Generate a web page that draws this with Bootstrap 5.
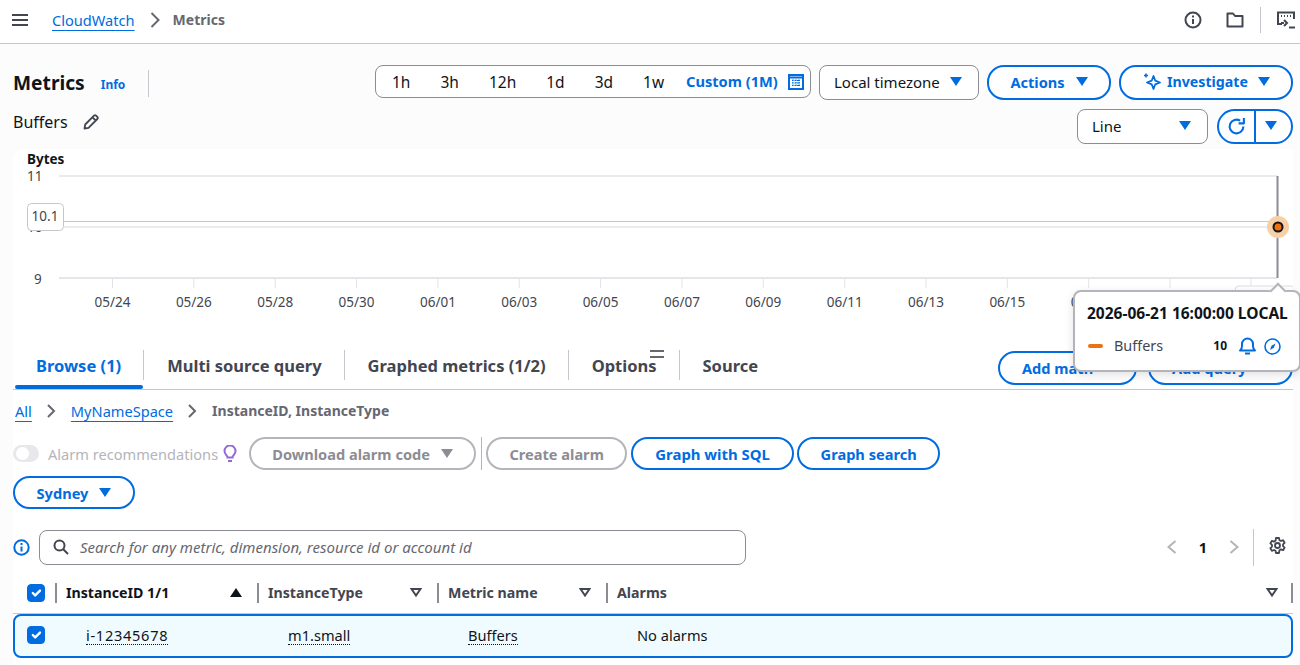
<!DOCTYPE html>
<html lang="en">
<head>
    <meta charset="UTF-8">
    <meta name="viewport" content="width=device-width, initial-scale=1.0">
    <title>Metrics | CloudWatch</title>
    <link href="https://cdn.jsdelivr.net/npm/bootstrap@5.3.0/dist/css/bootstrap.min.css" rel="stylesheet">
    <style>
        html, body { height: 100%; overflow: hidden; }
        body { font-family: "Noto Sans", "Liberation Sans", sans-serif; font-size: 14.6px; line-height: 20px; color: #0f141a; background: #fff; position: relative; }
        svg { display: block; flex: none; }
        a { color: #006ce0; }

        .topbar { height: 44px; border-bottom: 1px solid #c6c6cd; padding: 0 5px 3px 12px; }
        .crumb-link { text-decoration: underline; text-underline-offset: 4px; text-decoration-thickness: 1px; }
        .crumb-current { color: #656871; font-weight: 700; font-size: 14px; }
        .crumb-top { margin-left: 24px; }
        .crumb-sep { margin: 0 13px 0 15px; }
        .top-divider { width: 1px; height: 26px; background: #c6c6cd; }

        .page-wrap { background: #fcfcfd; padding: 0 7px 0 13px; height: 621px; }
        .head-area { height: 105px; }
        .page-title { font-size: 19.2px; line-height: 28px; font-weight: 700; margin: 0; }
        .info-link { font-size: 12px; font-weight: 700; text-decoration: none; margin: 3px 23px 0 16px; }
        .title-divider { width: 1px; height: 27px; background: #c6c6cd; }
        .title-row { margin-top: 25px; }
        .graph-name { margin-top: 13px; height: 24px; font-size: 16px; }
        .pencil-icon { margin-left: 15px; }

        .controls-row { margin-top: 21px; height: 35px; gap: 8px; }
        .controls-row + .controls-row { margin-top: 9px; gap: 9px; }
        .range-box { height: 33px; width: 436px; border: 1px solid #8c8c94; border-radius: 8px; background: #fff; padding: 0 6px 0 1px; }
        .range-item { padding: 0 15px; font-size: 15.500px; }
        .range-custom { color: #006ce0; font-weight: 700; margin-left: 7px; margin-right: 10px; padding-bottom: 2px; }
        .select-box { height: 35px; border: 1px solid #8c8c94; border-radius: 8px; background: #fff; padding: 0 16px 2px 14px; font-size: 15px; }
        .select-tz { width: 160px; }
        .select-line { width: 131px; }

        .pill-btn { height: 33px; border: 2px solid #006ce0; border-radius: 17px; background: #fff; color: #006ce0; font-weight: 700; font-size: 14.6px; line-height: 20px; padding: 0 22px; display: inline-flex; align-items: center; justify-content: center; white-space: nowrap; }
        .pill-btn:hover, .pill-btn:disabled { color: #006ce0; border-color: #006ce0; background: #fff; }
        .pill-btn:disabled { opacity: 1; color: #8c8c94; border-color: #b4b4bb; }
        .head-btn { height: 35px; padding-bottom: 2px; }
        .btn-actions { width: 124px; gap: 11px; }
        .btn-investigate { width: 174px; justify-content: flex-start; font-size: 14.2px; }
        .spark-icon { margin-right: 6px; }
        .investigate-caret { margin-left: 10px; }
        .split-left, .split-right { height: 35px; padding: 0; }
        .split-left { width: 38px; border-radius: 18px 0 0 18px; border-right-width: 1px; }
        .split-right { width: 38px; border-radius: 0 18px 18px 0; border-left-width: 1px; padding: 0 5px 3px 0; }

        .work-panel { background: #fff; height: 516px; border-radius: 10px 0 0 0; }
        .chart-text { font-family: "Noto Sans", "Liberation Sans", sans-serif; font-size: 13.500px; fill: #424650; }
        .chart-unit { font-weight: 700; fill: #0f141a; }

        .tab-row { height: 40px; border-bottom: 1px solid #c6c6cd; }
        .tab-item { height: 38px; padding: 0 22px 6px 24px; display: flex; align-items: center; font-size: 16.500px; font-weight: 700; color: #424650; position: relative; white-space: nowrap; }
        .tab-item + .tab-item::before { content: ""; position: absolute; left: 0; top: 0; height: 30px; width: 1px; background: #c6c6cd; }
        .tab-active { color: #006ce0; margin-left: 2px; padding: 0 22px 6px 21px; }
        .tab-active::after { content: ""; position: absolute; left: 0; right: 0; bottom: -1px; height: 4px; border-radius: 2px; background: #006ce0; }
        .add-math { width: 139px; height: 34px; margin: 1px 11px 0 0; justify-content: flex-start; }
        .add-query { width: 145px; height: 34px; margin-top: 1px; justify-content: flex-start; }

        .path-row { height: 20px; margin-top: 11px; padding-left: 2px; gap: 15px; }
        .action-row { margin-top: 16px; height: 33px; gap: 4px; }
        .alarm-toggle { width: 26px; height: 17px; border-radius: 9px; background: #e8e8ec; position: relative; }
        .alarm-toggle::after { content: ""; position: absolute; left: 3px; top: 2px; width: 13px; height: 13px; border-radius: 50%; background: #fff; }
        .alarm-label { color: #b4b4bb; margin: 0 1px 0 5px; }
        .action-divider { width: 1px; height: 33px; background: #b4b4bb; margin: 0 0 0 1px; }
        .btn-download { width: 227px; margin-left: 8px; gap: 11px; }
        .btn-create { width: 141px; }
        .btn-sql { width: 163px; font-size: 14.9px; }
        .btn-search { width: 143px; margin-left: -1px; }
        .region-row { margin-top: 6px; }
        .btn-region { width: 122px; gap: 11px; }

        .search-row { margin-top: 20px; height: 36px; }
        .search-box { width: 707px; height: 35px; margin-left: 9px; border: 1px solid #8c8c94; border-radius: 8px; padding: 0 13px; gap: 11px; }
        .search-box input { border: 0; outline: 0; flex: 1; font: italic 15px "Noto Sans", "Liberation Sans", sans-serif; color: #0f141a; background: transparent; padding: 0; }
        .search-box input::placeholder { color: #656871; }
        .pager-prev { margin-right: 16px; }
        .pager-num { font-weight: 700; width: 20px; text-align: center; margin-right: 16px; }
        .pager-divider { width: 1px; height: 37px; background: #c6c6cd; margin: 0 15px 0 14px; }
        .pager-end { width: 7px; }

        .grid-row { display: grid; grid-template-columns: 42px 202px 180px 169px 1fr; }
        .grid-head { height: 37px; margin-top: 12px; border-bottom: 1px solid #c6c6cd; font-weight: 700; font-size: 14.2px; color: #424650; align-items: start; }
        .grid-head > div { position: relative; height: 31px; display: flex; align-items: center; justify-content: space-between; padding: 0 15px 0 11px; }
        .grid-head > div.sel-cell { padding: 0 0 0 14px; justify-content: flex-start; }
        .grid-head > div:not(.sel-cell)::before { content: ""; position: absolute; left: 0; top: 6px; width: 2px; height: 20px; background: #8c8c94; }
        .grid-head > div:last-child::after { content: ""; position: absolute; right: 0; top: 6px; width: 2px; height: 20px; background: #8c8c94; }
        .col-first { color: #0f141a; }
        .grid-body { height: 44px; border: 2px solid #006ce0; border-radius: 8px; background: #f0fbff; align-items: center; padding-bottom: 2px; }
        .grid-body > div { padding-left: 29px; }
        .grid-body > div:first-child { padding-left: 12px; display: flex; }
        .dash-under { border-bottom: 1px dotted #0f141a; line-height: 17px; display: inline-block; }
        .id-value { letter-spacing: .7px; }
        .form-check-input.row-check { width: 18px; height: 18px; margin: 0; border-radius: 4px; background-color: #006ce0; border-color: #006ce0; opacity: 1; flex: none; }

        /* lies over the chart and the tab row */
        .hover-card { position: absolute; left: 1073px; top: 290px; width: 228px; height: 82px; background: #fff; border: 2px solid #b4b4bb; border-radius: 8px; box-shadow: 0 3px 10px rgba(0, 7, 22, .12); padding: 5px 0 0 12px; z-index: 3; }
        .hover-card::before { content: ""; position: absolute; left: 197px; top: -7px; width: 12px; height: 12px; background: #fff; border-left: 2px solid #b4b4bb; border-top: 2px solid #b4b4bb; transform: rotate(45deg); }
        .hover-time { font-weight: 700; font-size: 15.500px; line-height: 24px; margin-top: 4px; white-space: nowrap; position: relative; }
        .hover-line { margin-top: 11px; height: 20px; width: 194px; color: #424650; font-size: 14.4px; }
        .swatch-line { width: 15px; height: 4px; border-radius: 2px; background: #ec7211; margin: 0 11px 0 1px; }
        .hover-value { font-weight: 700; font-size: 12px; color: #0f141a; margin-left: auto; margin-right: 12px; }
        .drag-bars { position: absolute; left: 650px; top: 350px; width: 14px; height: 8px; border-top: 2px solid #656871; border-bottom: 2px solid #656871; z-index: 2; }
    </style>
</head>
<body>

<!-- top bar -->
<header class="topbar d-flex align-items-center">
    <svg width="16" height="14" viewBox="0 0 16 14" fill="none" stroke="#424650" stroke-width="2"><path d="M0 2h16M0 7h16M0 12h16"/></svg>
    <a href="#" class="crumb-link crumb-top">CloudWatch</a>
    <svg class="crumb-sep" width="10" height="16" viewBox="0 0 10 16" fill="none" stroke="#656871" stroke-width="2"><path d="M1.500 1l7 7-7 7"/></svg>
    <span class="crumb-current">Metrics</span>
    <div class="ms-auto d-flex align-items-center">
        <svg width="18" height="18" viewBox="0 0 18 18" fill="none" stroke="#424650" stroke-width="2"><circle cx="9" cy="9" r="7.500"/><path d="M9 8v5M9 4.500v2"/></svg>
        <svg class="ms-4" width="18" height="16" viewBox="0 0 18 16" fill="none" stroke="#424650" stroke-width="2" stroke-linejoin="round"><path d="M1.500 14.500v-13h5.500l2 2.500h7.500v10.500z"/></svg>
        <div class="top-divider ms-3 me-3"></div>
        <svg width="18" height="18" viewBox="0 0 18 18" fill="none" stroke="#424650" stroke-width="2"><path d="M5 13H1V1.500h16V8"/><path d="M4 5h1M7 5h1M10 5h1M13 5h1" stroke-width="2"/><path d="M7 9l3 3-3 3M7 12H4M12 16.500h6"/></svg>
    </div>
</header>

<div class="page-wrap">
    <div class="head-area d-flex justify-content-between">
        <div>
            <div class="title-row d-flex align-items-center">
                <h1 class="page-title">Metrics</h1>
                <a href="#" class="info-link">Info</a>
                <div class="title-divider"></div>
            </div>
            <div class="graph-name d-flex align-items-center">
                <span>Buffers</span>
                <svg class="pencil-icon" width="16" height="16" viewBox="0 0 16 16" fill="none" stroke="#424650" stroke-width="1.800" stroke-linejoin="round"><path d="M1.500 14.500l.7-4L11 1.700a1.500 1.500 0 0 1 2.100 0l1.200 1.200a1.500 1.500 0 0 1 0 2.100L5.500 13.800zM9.500 3.300l3.200 3.200"/></svg>
            </div>
        </div>
        <div>
            <div class="controls-row d-flex justify-content-end align-items-start">
                <div class="range-box d-flex align-items-center">
                    <span class="range-item">1h</span>
                    <span class="range-item">3h</span>
                    <span class="range-item">12h</span>
                    <span class="range-item">1d</span>
                    <span class="range-item">3d</span>
                    <span class="range-item">1w</span>
                    <span class="range-custom">Custom (1M)</span>
                    <svg width="16" height="16" viewBox="0 0 16 16" fill="none" stroke="#006ce0"><rect x="1" y="1" width="14" height="14" stroke-width="2"/><path d="M1 3.500h14" stroke-width="2"/><path d="M4 6.500h8M4 9h8M4 11.500h8M5 5.500v7M8 5.500v7M11 5.500v7" stroke-width="1.200" stroke-dasharray="1.500 1"/></svg>
                </div>
                <div class="select-box select-tz d-flex align-items-center justify-content-between">
                    <span>Local timezone</span>
                    <svg width="12" height="9" viewBox="0 0 12 9" fill="#006ce0"><path d="M0 0h12L6 9z"/></svg>
                </div>
                <button type="button" class="btn pill-btn head-btn btn-actions">Actions <svg width="12" height="9" viewBox="0 0 12 9" fill="#006ce0"><path d="M0 0h12L6 9z"/></svg></button>
                <button type="button" class="btn pill-btn head-btn btn-investigate">
                    <svg class="spark-icon" width="18" height="18" viewBox="0 0 18 18" fill="none" stroke="#006ce0" stroke-width="1.800" stroke-linejoin="round"><path d="M10.500 3l1.800 4.700 4.700 1.800-4.700 1.800-1.800 4.700-1.800-4.700L4 9.500l4.700-1.800z"/><path d="M3 .5v4M1 2.500h4" stroke-width="1.500"/></svg>
                    Investigate
                    <svg class="investigate-caret" width="12" height="9" viewBox="0 0 12 9" fill="#006ce0"><path d="M0 0h12L6 9z"/></svg>
                </button>
            </div>
            <div class="controls-row d-flex justify-content-end align-items-start">
                <div class="select-box select-line d-flex align-items-center justify-content-between">
                    <span>Line</span>
                    <svg width="12" height="9" viewBox="0 0 12 9" fill="#006ce0"><path d="M0 0h12L6 9z"/></svg>
                </div>
                <div class="d-flex">
                    <button type="button" class="btn pill-btn split-left" aria-label="Refresh">
                        <svg width="19" height="19" viewBox="0 0 18 18" fill="none" stroke="#006ce0" stroke-width="2"><path d="M15.500 9A6.500 6.500 0 1 1 12.500 3.500"/><path d="M16 1v5h-5" stroke-linejoin="round"/></svg>
                    </button>
                    <button type="button" class="btn pill-btn split-right" aria-label="Refresh options">
                        <svg width="12" height="9" viewBox="0 0 12 9" fill="#006ce0"><path d="M0 0h12L6 9z"/></svg>
                    </button>
                </div>
            </div>
        </div>
    </div>

    <div class="work-panel">
        <!-- chart, viewBox uses page coordinates -->
        <svg id="chart" width="1280" height="201" viewBox="13 149 1280 201"></svg>

        <div class="tab-row d-flex">
            <div class="tab-item tab-active">Browse (1)</div>
            <div class="tab-item">Multi source query</div>
            <div class="tab-item">Graphed metrics (1/2)</div>
            <div class="tab-item">Options</div>
            <div class="tab-item">Source</div>
            <div class="ms-auto d-flex align-items-start">
                <button type="button" class="btn pill-btn add-math">Add math</button>
                <button type="button" class="btn pill-btn add-query">Add query</button>
            </div>
        </div>

        <div class="path-row d-flex align-items-center">
            <a href="#" class="crumb-link">All</a>
            <svg width="9" height="14" viewBox="0 0 9 14" fill="none" stroke="#656871" stroke-width="2"><path d="M1 1l6 6-6 6"/></svg>
            <a href="#" class="crumb-link">MyNameSpace</a>
            <svg width="9" height="14" viewBox="0 0 9 14" fill="none" stroke="#656871" stroke-width="2"><path d="M1 1l6 6-6 6"/></svg>
            <span class="crumb-current">InstanceID, InstanceType</span>
        </div>

        <div class="action-row d-flex align-items-center">
            <span class="alarm-toggle"></span>
            <span class="alarm-label">Alarm recommendations</span>
            <svg width="14" height="18" viewBox="0 0 14 18" fill="none" stroke="#9469d6" stroke-width="2"><path d="M4.500 12.500c0-2-3-3-3-6.500a5.500 5.500 0 0 1 11 0c0 3.500-3 4.500-3 6.500zM5 16h4"/></svg>
            <button type="button" class="btn pill-btn btn-download" disabled>Download alarm code <svg width="12" height="9" viewBox="0 0 12 9" fill="#8c8c94"><path d="M0 0h12L6 9z"/></svg></button>
            <div class="action-divider"></div>
            <button type="button" class="btn pill-btn btn-create" disabled>Create alarm</button>
            <button type="button" class="btn pill-btn btn-sql">Graph with SQL</button>
            <button type="button" class="btn pill-btn btn-search">Graph search</button>
        </div>
        <div class="region-row">
            <button type="button" class="btn pill-btn btn-region">Sydney <svg width="12" height="9" viewBox="0 0 12 9" fill="#006ce0"><path d="M0 0h12L6 9z"/></svg></button>
        </div>

        <div class="search-row d-flex align-items-center">
            <svg width="17" height="17" viewBox="0 0 17 17" fill="none" stroke="#006ce0" stroke-width="2"><circle cx="8.500" cy="8.500" r="7.200"/><path d="M8.500 7.500v5M8.500 4v2"/></svg>
            <div class="search-box d-flex align-items-center">
                <svg width="16" height="16" viewBox="0 0 16 16" fill="none" stroke="#424650" stroke-width="2"><circle cx="6.500" cy="6.500" r="5"/><path d="M10 10l5 5"/></svg>
                <input type="text" placeholder="Search for any metric, dimension, resource id or account id">
            </div>
            <div class="ms-auto d-flex align-items-center">
                <svg class="pager-prev" width="10" height="14" viewBox="0 0 10 14" fill="none" stroke="#b4b4bb" stroke-width="2"><path d="M8.500 1l-7 6 7 6"/></svg>
                <span class="pager-num">1</span>
                <svg width="10" height="14" viewBox="0 0 10 14" fill="none" stroke="#b4b4bb" stroke-width="2"><path d="M1.500 1l7 6-7 6"/></svg>
                <div class="pager-divider"></div>
                <svg class="mb-1" width="17" height="17" viewBox="0 0 17 17" fill="none" stroke="#424650" stroke-width="1.800" stroke-linejoin="round"><circle cx="8.500" cy="8.500" r="2.500"/><path d="M7 1h3l.5 2.200 1.500.8 2.100-.8 1.500 2.600-1.600 1.500v1.800l1.600 1.500-1.500 2.600-2.100-.8-1.500.8L10 16H7l-.5-2.200-1.500-.8-2.100.8-1.500-2.600 1.600-1.500V7.900L1.400 6.400l1.500-2.600 2.100.8 1.500-.8z"/></svg>
                <span class="pager-end"></span>
            </div>
        </div>

        <div class="grid-row grid-head">
            <div class="sel-cell"><input class="form-check-input row-check" type="checkbox" checked aria-label="Select all"></div>
            <div class="col-first">InstanceID 1/1 <svg width="12" height="9" viewBox="0 0 12 9" fill="#0f141a"><path d="M6 0l6 9H0z"/></svg></div>
            <div>InstanceType <svg width="12" height="9" viewBox="0 0 12 9" fill="none" stroke="#424650" stroke-width="2"><path d="M1.500 1h9L6 7.500z"/></svg></div>
            <div>Metric name <svg width="12" height="9" viewBox="0 0 12 9" fill="none" stroke="#424650" stroke-width="2"><path d="M1.500 1h9L6 7.500z"/></svg></div>
            <div>Alarms <svg width="12" height="9" viewBox="0 0 12 9" fill="none" stroke="#424650" stroke-width="2"><path d="M1.500 1h9L6 7.500z"/></svg></div>
        </div>
        <div class="grid-row grid-body">
            <div><input class="form-check-input row-check" type="checkbox" checked aria-label="Select row"></div>
            <div><span class="dash-under id-value">i-12345678</span></div>
            <div><span class="dash-under">m1.small</span></div>
            <div><span class="dash-under">Buffers</span></div>
            <div>No alarms</div>
        </div>
    </div>
</div>

<div class="drag-bars"></div>

<!-- hover popover on the last data point -->
<div class="hover-card">
    <div class="hover-time">2026-06-21 16:00:00 LOCAL</div>
    <div class="hover-line d-flex align-items-center">
        <span class="swatch-line"></span>
        <span>Buffers</span>
        <span class="hover-value">10</span>
        <svg width="17" height="18" viewBox="0 0 17 18" fill="none" stroke="#006ce0" stroke-width="2" stroke-linejoin="round"><path d="M1 13.500c1.500-1 2-2 2-4.500V7a5.500 5.500 0 0 1 11 0v2c0 2.500.5 3.500 2 4.500zM6 16.500h5"/></svg>
        <svg class="ms-2" width="17" height="17" viewBox="0 0 17 17" fill="none" stroke="#006ce0" stroke-width="1.600"><circle cx="8.500" cy="8.500" r="7.500"/><path d="M11.500 5.500L9.800 9.800 6 12l1.500-4.200z" fill="#006ce0" stroke="none"/></svg>
    </div>
</div>

<script src="https://cdn.jsdelivr.net/npm/bootstrap@5.3.0/dist/js/bootstrap.bundle.min.js"></script>
<script>
    // Draw the chart from data, in page coordinates
    const labels = ['05/24','05/26','05/28','05/30','06/01','06/03','06/05','06/07','06/09','06/11','06/13','06/15','06/17'];
    let s = '';
    s += '<text x="27" y="164" class="chart-text chart-unit">Bytes</text>';
    s += '<text x="27" y="181" class="chart-text">11</text>';
    s += '<text x="27" y="232" class="chart-text">10</text>';
    s += '<text x="34" y="284" class="chart-text">9</text>';
    s += '<path d="M59 176H1277" stroke="#e3e3e7" stroke-width="1.500"/>';
    s += '<path d="M59 278H1277" stroke="#dedee3" stroke-width="1.500"/>';
    s += '<path d="M64 227H1277" stroke="#e9ebed" stroke-width="2"/>';
    labels.forEach((lab, i) => {
        const x = 112.5 + i * 81.35;
        s += `<path d="M${x} 279v9" stroke="#e3e3e7"/>`;
        s += `<text x="${x}" y="307" text-anchor="middle" class="chart-text">${lab}</text>`;
    });
    s += '<path d="M1170 279v9M1251 279v9" stroke="#e3e3e7"/>';
    s += '<path d="M64 221.500H1277" stroke="#c6c6cd"/>';
    s += '<path d="M1277.500 176V278" stroke="#8c8c94" stroke-width="2"/>';
    s += '<rect x="27.500" y="203.500" width="36" height="27" rx="4" fill="#fff" stroke="#c6c6cd"/>';
    s += '<text x="45" y="221" text-anchor="middle" class="chart-text" fill="#0f141a">10.1</text>';
    s += '<rect x="1235" y="286" width="60" height="20" rx="4" fill="#fff" stroke="#dedee3"/>';
    s += '<circle cx="1278" cy="227" r="11" fill="#f9cfa6"/>';
    s += '<circle cx="1278" cy="227" r="4.500" fill="#ec7211" stroke="#0f141a" stroke-width="2"/>';
    document.getElementById('chart').innerHTML = s;
</script>

</body>
</html>
